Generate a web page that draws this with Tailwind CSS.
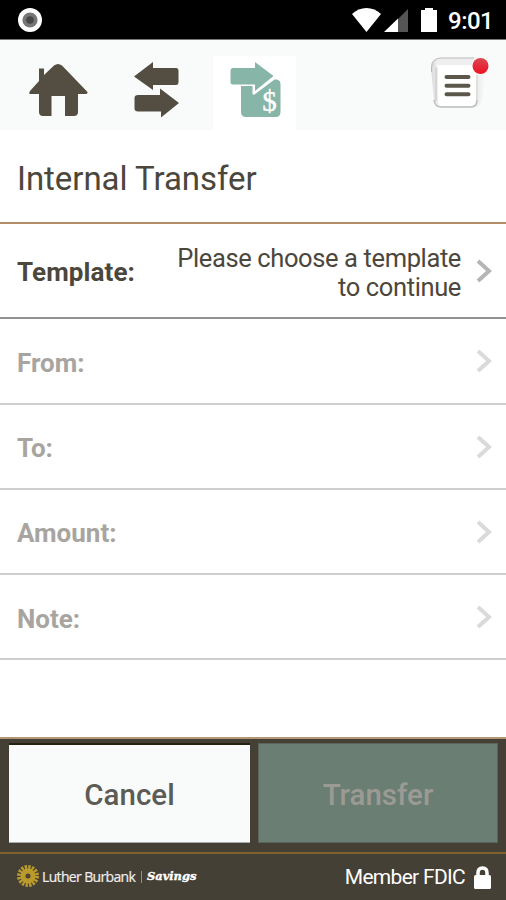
<!DOCTYPE html>
<html lang="en">
<head>
<meta charset="utf-8">
<title>Internal Transfer</title>
<script src="https://cdn.jsdelivr.net/npm/@tailwindcss/browser@4"></script>
</head>
<body class="bg-white">
<div class="flex h-[900px] w-[506px] flex-col overflow-hidden bg-white font-['Roboto',sans-serif] text-[#4c473c]">
  <div class="flex h-10 shrink-0 items-center justify-between border-b border-[#777] bg-black pl-[18px] pr-[14px] text-white">
    <svg class="size-6" viewBox="0 0 24 24"><circle cx="12" cy="12" r="12" fill="#fff"/><circle cx="12" cy="12" r="7.6" fill="#777"/><circle cx="12" cy="12" r="3.8" fill="#484848"/></svg>
    <div class="flex items-center">
      <svg class="h-[26px] w-[86px]" viewBox="0 0 86 26"><path d="M0 7C8-1 21-1 29 7L14.500 25Z" fill="#fff"/><path d="M56 2V25H46V12Z" fill="#555"/><path d="M46 11.500V25H32Z" fill="#fff"/><path d="M70 3H73V1H81V3H85V25H69V3Z" fill="#fff"/></svg>
      <span class="ml-[10px] w-[44px] whitespace-nowrap pt-[2px] text-[24px] font-medium leading-none tracking-[-0.5px]">9:01</span>
    </div>
  </div>
  <header class="flex h-[90px] shrink-0 bg-[#f9fbfa]">
    <div class="w-[213px]">
      <svg class="h-[90px] w-[213px]" viewBox="0 0 213 90" fill="#544e42"><path d="M39 28.500H44V35L54 25.500Q58 22.500 62 25.500L87.500 52Q88 54 86 54H78V72Q78 76 74 76H65V56H51.500V76H43Q39 76 39 72V54H30Q28.500 53.500 30 51L39 41Z"/><path d="M134 36.500L153 22V28H176Q178.500 28 178.500 31V42Q178.500 45 176 45H153V50Z"/><path d="M179 63L161 77.500V71.500H138Q134.500 71.500 134.500 68.500V58Q134.500 55 138 55H160V48.500Z"/></svg>
    </div>
    <div class="mt-4 w-[83px] bg-white">
      <svg class="h-[74px] w-[83px]" viewBox="0 0 83 74"><path d="M28 30H39.500V38.500H41.500L61.500 23.500Q67.500 23 67.500 28V56Q67.500 61 62.500 61H33Q28 61 28 56Z" fill="#87b5a8"/><path d="M17.500 15Q17.500 12 20 12H42V6L60.500 20L42 35V28.500H20Q17.500 28.500 17.500 26Z" fill="#87b5a8"/><text x="56.500" y="54.500" text-anchor="middle" font-family="Liberation Serif" font-size="29" fill="#fff" stroke="#fff" stroke-width=".4">$</text></svg>
    </div>
    <div class="flex-1">
      <svg class="h-[90px] w-[210px]" viewBox="0 0 210 90"><defs><linearGradient id="edge"><stop stop-color="#d8d8d8"/><stop offset=".12" stop-color="#eee"/><stop offset=".85" stop-color="#eee"/><stop offset="1" stop-color="#f7f8f7"/></linearGradient><linearGradient id="red" x2="0" y2="1"><stop stop-color="#d94750"/><stop offset="1" stop-color="#f01024"/></linearGradient></defs><path d="M145 17.500H182Q190 17.500 189.500 26L186 60Q185 67 178 67H143Q139 67 138 60L135 28Q135 17.500 145 17.500Z" fill="url(#edge)"/><path d="M135.500 32V28Q135.500 18 145.500 18H178" fill="none" stroke="#bbb"/><path d="M138 22Q142 25 142 29V61Q142 66 147 66H173Q178 66 180 62V25H142Z" fill="#fff"/><path d="M138 60Q139 67 145 67H175Q181 67 181 60" fill="none" stroke="#bdbdbd" stroke-width="1.500"/><path d="M181 60V35" fill="none" stroke="#d8d8d8" stroke-width="1.500"/><path d="M140 61V28" fill="none" stroke="#d5d5d5" stroke-width="2"/><g stroke="#5b574b" stroke-width="4" stroke-linecap="round"><path d="M150.500 37H172.500M150.500 45.700H172.500M150.500 54.300H172.500"/></g><circle cx="184.500" cy="26" r="9" fill="#fff"/><circle cx="184.500" cy="26" r="8" fill="url(#red)"/></svg>
    </div>
  </header>
  <h1 class="flex h-[94px] shrink-0 items-center border-b-2 border-[#b38d69] pl-[17px] pt-[5px] text-[33px] tracking-[-0.05px]">Internal Transfer</h1>
  <div class="flex h-[95px] shrink-0 items-center border-b-2 border-[#929090] pl-[17px] pr-[14px]">
    <span class="pt-1 text-[26px] font-bold tracking-[0.1px]">Template:</span>
    <span class="ml-auto pt-1 text-right text-[25.500px] leading-[29px] tracking-[-0.38px]">Please choose a template<br>to continue</span>
    <svg class="ml-[14px] h-[24px] w-[17px]" viewBox="0 0 17 24"><path d="M3 2L14 12L3 22" fill="none" stroke="#b5b5b5" stroke-width="4"/></svg>
  </div>
  <div class="flex h-[86px] shrink-0 items-center justify-between border-b-2 border-[#cecece] pl-[17px] pr-[14px] text-[26px] font-bold text-[#a8a5a0]"><span class="pt-1">From:</span><svg class="h-[24px] w-[17px]" viewBox="0 0 17 24"><path d="M3 2L14 12L3 22" fill="none" stroke="#dadada" stroke-width="4"/></svg></div>
  <div class="flex h-[85px] shrink-0 items-center justify-between border-b-2 border-[#cecece] pl-[17px] pr-[14px] text-[26px] font-bold text-[#a8a5a0]"><span class="pt-1">To:</span><svg class="h-[24px] w-[17px]" viewBox="0 0 17 24"><path d="M3 2L14 12L3 22" fill="none" stroke="#dadada" stroke-width="4"/></svg></div>
  <div class="flex h-[85px] shrink-0 items-center justify-between border-b-2 border-[#cecece] pl-[17px] pr-[14px] text-[26px] font-bold text-[#a8a5a0]"><span class="pt-1">Amount:</span><svg class="h-[24px] w-[17px]" viewBox="0 0 17 24"><path d="M3 2L14 12L3 22" fill="none" stroke="#dadada" stroke-width="4"/></svg></div>
  <div class="flex h-[85px] shrink-0 items-center justify-between border-b-2 border-[#cecece] pl-[17px] pr-[14px] text-[26px] font-bold text-[#a8a5a0]"><span class="pt-[6px]">Note:</span><svg class="h-[24px] w-[17px]" viewBox="0 0 17 24"><path d="M3 2L14 12L3 22" fill="none" stroke="#dadada" stroke-width="4"/></svg></div>
  <div class="flex-1"></div>
  <div class="flex h-[115px] shrink-0 gap-2 border-t-2 border-[#b29675] bg-[#454036] pb-[9px] pl-[9px] pr-2 pt-[4px]">
    <button class="w-[241px] border-b border-t-2 border-b-[#aaa] border-t-[#25200f] bg-[#f9fbfa] pt-[4px] text-[29.500px] font-medium text-[#5d5b56]">Cancel</button>
    <button class="w-[240px] border border-[#59655a] bg-[#6a7e73] pt-[4px] text-[29.500px] font-medium text-[#9c9a95]">Transfer</button>
  </div>
  <footer class="flex h-12 shrink-0 items-center border-t-2 border-[#80602b] bg-[#454036] pl-4 pr-[15px]">
    <svg class="mb-[2px] size-6" viewBox="0 0 24 24"><circle cx="12" cy="12" r="8.500" fill="none" stroke="#b99a2b" stroke-width="5" stroke-dasharray="2.200 1.140"/><circle cx="12" cy="12" r="5" fill="none" stroke="#b99a2b" stroke-width="5"/><circle cx="12" cy="12" r="1.700" fill="#55472a"/></svg>
    <span class="ml-[2px] w-[94px] whitespace-nowrap pb-[2px] font-['Open_Sans',sans-serif] text-[14px] tracking-[-0.65px] text-[#eee] [-webkit-text-stroke:0.2px_#eee]">Luther Burbank</span>
    <span class="ml-[5px] h-3 w-px bg-[#b88b2c]"></span>
    <span class="ml-[5px] whitespace-nowrap pb-px font-['DejaVu_Serif',serif] text-[11.500px] font-bold italic tracking-[-0.05px] text-white [-webkit-text-stroke:0.4px_#fff]">Savings</span>
    <span class="ml-auto whitespace-nowrap pt-px text-[21px] tracking-[-0.7px] text-white">Member FDIC</span>
    <svg class="ml-[9px] h-[23px] w-[17px]" viewBox="0 0 17 23"><path d="M4 12V7Q4 2 8.500 2T13 7V12" fill="none" stroke="#fff" stroke-width="3.500"/><rect y="9" width="17" height="14" rx="1.500" fill="#fff"/></svg>
  </footer>
</div>
</body>
</html>
